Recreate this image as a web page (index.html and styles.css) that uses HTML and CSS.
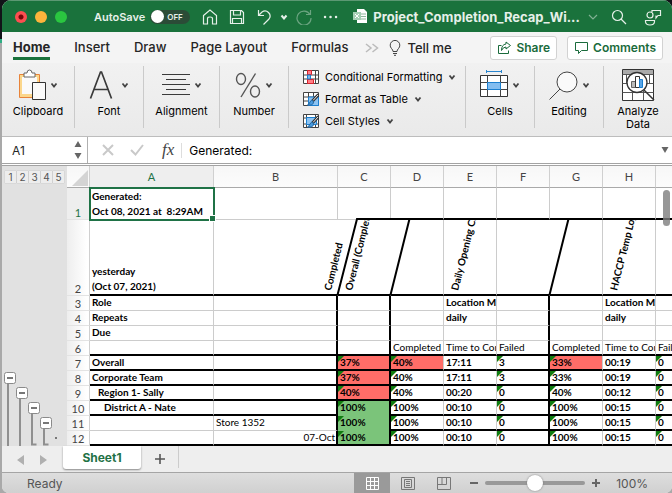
FILE: index.html
```html
<!DOCTYPE html>
<html lang="en">

<head>
    <meta charset="UTF-8">
    <meta name="viewport" content="width=device-width, initial-scale=1.0">
    <title>Project_Completion_Recap</title>
    <link rel="stylesheet" href="styles.css">
</head>

<body>
    <div class="window">
        <header class="titlebar">
            <div class="lights">
                <span class="light red"></span>
                <span class="light yellow"></span>
                <span class="light green"></span>
            </div>
            <label class="autosave">AutoSave
                <span class="toggle"><input type="checkbox"><span class="toggle-text">OFF</span></span>
            </label>
            <div class="quick">
                <button type="button" aria-label="Home">
                    <svg width="16" height="16" viewBox="0 0 16 16"><path d="M1.5 6.5 8 1l6.500 5.500V15h-4V9.500Q10.500 8 8 8t-2.500 1.500V15h-4z"/></svg>
                </button>
                <button type="button" aria-label="Save">
                    <svg width="16" height="16" viewBox="0 0 16 16"><path d="M1.500 1.500h11l2 2v11h-13zM4.500 1.500v4.500h7V1.500M3.500 14.500V9.500h9v5"/></svg>
                </button>
                <button type="button" aria-label="Undo">
                    <svg width="16" height="16" viewBox="0 0 16 16"><path d="M2.500 1v5.500H8M2.500 6.500 6 3q3.500-2.500 6.500.500t.500 6.500L7.500 15.500"/></svg>
                </button>
                <button type="button" class="tiny" aria-label="Undo list">
                    <svg width="8" height="6" viewBox="0 0 8 6"><path class="bold" d="M1.500 1.500 4 4.500 6.500 1.500"/></svg>
                </button>
                <button type="button" class="dim" aria-label="Redo">
                    <svg width="16" height="16" viewBox="0 0 16 16"><path d="M14.500 1v4.500H10M14 5.500A7 7 0 1 0 15 9"/></svg>
                </button>
                <button type="button" aria-label="More">
                    <svg width="16" height="16" viewBox="0 0 16 16"><path class="dots" d="M2 8h.1M7.500 8h.1M13 8h.1"/></svg>
                </button>
            </div>
            <div class="doc">
                <svg width="15" height="15" viewBox="0 0 15 15"><path d="M4 0h7l3 3v11H4z" fill="#fff"/><path d="M8 5h5M8 7.500h5M8 10h5" stroke="#8db89c"/><path d="M0 3h8v8H0z" fill="#a5cfb4"/><path d="m2 5 4 4M6 5 2 9" stroke="#fff"/></svg>
                <span>Project_Completion_Recap_Wi...</span>
            </div>
            <svg class="doc-more" width="10" height="6" viewBox="0 0 10 6"><path d="m1 1 4 4 4-4"/></svg>
            <div class="tools">
                <button type="button" aria-label="Search">
                    <svg width="16" height="16" viewBox="0 0 16 16"><circle cx="6.500" cy="6.500" r="5"/><path d="m10 10 5 5"/></svg>
                </button>
                <button type="button" aria-label="Share with people">
                    <svg width="18" height="18" viewBox="0 0 18 18"><circle cx="6" cy="7" r="3"/><path d="M1.500 12.500h9v1q0 3.500-4.500 3.500t-4.500-3.500zM8 4V2.500h8.500v5H14l-2 2.500V7.500"/></svg>
                </button>
            </div>
        </header>

        <nav class="tabs">
            <a href="#" class="tab active">Home</a>
            <a href="#" class="tab">Insert</a>
            <a href="#" class="tab">Draw</a>
            <a href="#" class="tab">Page Layout</a>
            <a href="#" class="tab">Formulas</a>
            <svg class="more" width="14" height="10" viewBox="0 0 14 10"><path d="m1 1 5 4-5 4M7.500 1l5 4-5 4"/></svg>
            <a href="#" class="tellme">
                <svg width="12" height="16" viewBox="0 0 12 16"><path d="M4 11.500Q4 10 2.500 8.500a4.800 4.800 0 1 1 7 0Q8 10 8 11.500zM4 13.500h4M5 15.300h2"/></svg>
                Tell me
            </a>
            <div class="actions">
                <button type="button" class="action">
                    <svg width="13" height="13" viewBox="0 0 13 13"><path d="M3.500 4.500h-3v8h10V9.500M8 1l4.500 3.500L8 8V6Q5 6 3.500 9.500 3.500 3.500 8 3z"/></svg>
                    Share
                </button>
                <button type="button" class="action">
                    <svg width="13" height="13" viewBox="0 0 13 13"><path d="M.500 1.500h12v8H6.500l-3 3v-3h-3z"/></svg>
                    Comments
                </button>
            </div>
        </nav>

        <section class="ribbon">
            <button type="button" class="group">
                <span class="icon-row">
                    <svg width="28" height="32" viewBox="0 0 28 32"><path d="M1.500 5.500h20v23h-20z" fill="#fbd78c" stroke="#e8833a"/><path d="M4 8h15v17H4z" fill="#fafafa"/><path d="M6 8V4h3q0-3 2.500-3T14 4h3v4z" fill="#fff" stroke="#666"/><path d="M14.500 13.500h13v17h-13z" fill="#fafafa" stroke="#333"/></svg>
                    <svg class="chev" width="8" height="6" viewBox="0 0 8 6"><path d="M1.500 1.500 4 4.500 6.500 1.500"/></svg>
                </span>
                <span>Clipboard</span>
            </button>
            <button type="button" class="group">
                <span class="icon-row">
                    <svg width="24" height="32" viewBox="0 0 24 32"><path d="M1.500 29.500 11.500 3h1l10 26.500M5 20.500h14" fill="none" stroke="#3a3a3a" stroke-width="1.700"/></svg>
                    <svg class="chev wide" width="8" height="6" viewBox="0 0 8 6"><path d="M1.500 1.500 4 4.500 6.500 1.500"/></svg>
                </span>
                <span>Font</span>
            </button>
            <button type="button" class="group medium">
                <span class="icon-row">
                    <svg width="28" height="32" viewBox="0 0 28 32"><path d="M0 5.500h28M4 10.500h20M0 15.500h28M4 20.500h20M0 25.500h28" stroke="#3a3a3a"/></svg>
                    <svg class="chev" width="8" height="6" viewBox="0 0 8 6"><path d="M1.500 1.500 4 4.500 6.500 1.500"/></svg>
                </span>
                <span>Alignment</span>
            </button>
            <button type="button" class="group">
                <span class="icon-row">
                    <svg width="26" height="32" viewBox="0 0 26 32"><g fill="none" stroke="#555" stroke-width="1.400"><ellipse cx="6" cy="10" rx="4.500" ry="5.500"/><ellipse cx="20" cy="22.500" rx="4.500" ry="5.500"/><path d="M20.500 4.500 6 28"/></g></svg>
                    <svg class="chev" width="8" height="6" viewBox="0 0 8 6"><path d="M1.500 1.500 4 4.500 6.500 1.500"/></svg>
                </span>
                <span>Number</span>
            </button>
            <div class="styles">
                <button type="button" class="style-btn">
                    <svg width="16" height="15" viewBox="0 0 16 15"><path d="M.500.500h15v13H.500zM.500 5h15M.500 9h15M4.500.500v13M12.500.500v13" fill="#fff" stroke="#444"/><path d="M4.500.500h4v4h-4zM4.500 9.500h6v4h-6z" fill="#ff7f86" stroke="#d8232f"/><path d="M4.500 5h3v4h-3z" fill="#7fb8ea" stroke="#1b7fd0"/></svg>
                    Conditional Formatting
                    <svg class="chev" width="8" height="6" viewBox="0 0 8 6"><path d="M1.500 1.500 4 4.500 6.500 1.500"/></svg>
                </button>
                <button type="button" class="style-btn">
                    <svg width="16" height="15" viewBox="0 0 16 15"><path d="M.500.500h15v13H.500zM.500 5h15M.500 9h15M5.500.500v13M10.500.500v13" fill="#fff" stroke="#444"/><path d="M5.500 5h10v8.500h-10z" fill="#8cc3f2" stroke="#1b7fd0"/><path d="M15.500 2.500 9.500 9" stroke="#333" stroke-width="3"/><path d="M15 3 10 8.500" stroke="#eee"/><path d="M10 8.500q-2-1-3 1.500T4.500 13q5 1 6-2z" fill="#4a9ce0" stroke="#25679f"/></svg>
                    Format as Table
                    <svg class="chev" width="8" height="6" viewBox="0 0 8 6"><path d="M1.500 1.500 4 4.500 6.500 1.500"/></svg>
                </button>
                <button type="button" class="style-btn">
                    <svg width="16" height="15" viewBox="0 0 16 15"><path d="M.500.500h15v13H.500zM.500 4h15M.500 10h15M3.500.500v13M12.500.500v13" fill="#fff" stroke="#444"/><path d="M3.500 3.500h10v7h-10z" fill="#8cc3f2" stroke="#1b7fd0"/><path d="M15.500 2.500 9.500 9" stroke="#333" stroke-width="3"/><path d="M15 3 10 8.500" stroke="#eee"/><path d="M10 8.500q-2-1-3 1.500T4.500 13q5 1 6-2z" fill="#4a9ce0" stroke="#25679f"/></svg>
                    Cell Styles
                    <svg class="chev" width="8" height="6" viewBox="0 0 8 6"><path d="M1.500 1.500 4 4.500 6.500 1.500"/></svg>
                </button>
            </div>
            <button type="button" class="group">
                <span class="icon-row">
                    <svg width="28" height="32" viewBox="0 0 28 32"><path d="M6.500 2.500h15M6.500 1v3M21.500 1v3" stroke="#2a86cf"/><path d="M.500 6.500h27v21H.500z" fill="#fff" stroke="#333"/><path d="M.500 13.500h27M.500 20.500h27M7.500 6.500v21M20.500 6.500v21" stroke="#444"/><path d="M7.500 13.500h13v7h-13z" fill="#83bdf0" stroke="#1b7fd0"/></svg>
                    <svg class="chev" width="8" height="6" viewBox="0 0 8 6"><path d="M1.500 1.500 4 4.500 6.500 1.500"/></svg>
                </span>
                <span>Cells</span>
            </button>
            <button type="button" class="group">
                <span class="icon-row">
                    <svg width="29" height="32" viewBox="0 0 29 32"><circle cx="18" cy="13" r="10" fill="#fafafa" stroke="#444"/><path d="M11 20 .500 30.500" stroke="#444"/></svg>
                    <svg class="chev" width="8" height="6" viewBox="0 0 8 6"><path d="M1.500 1.500 4 4.500 6.500 1.500"/></svg>
                </span>
                <span>Editing</span>
            </button>
            <button type="button" class="group">
                <span class="icon-row">
                    <svg width="33" height="32" viewBox="0 0 33 32"><path d="M.500.500h31v31H.500z" fill="#fff" stroke="#333"/><path d="M1 1h30v4H1z" fill="#aaa"/><path d="M.500 5.500h31M.500 14.500h31M.500 23.500h31M10.500 22v9M21.500 22v9M4.500 5v9M27.500 5v9" stroke="#555"/><circle cx="15" cy="13.500" r="10" fill="#fff" stroke="#333" stroke-width="1.300"/><path d="m22 21 10 10" stroke="#333" stroke-width="1.500"/><path d="M9.500 12.500h4v6h-4z" fill="#bbb" stroke="#666"/><path d="M13.500 7.500h4v11h-4z" fill="#fff" stroke="#333"/><path d="M17.500 10.500h3v8h-3z" fill="#5aa6e8" stroke="#1b7fd0"/></svg>
                </span>
                <span>Analyze<br>Data</span>
            </button>
        </section>

        <section class="formula-bar">
            <div class="name-box">
                <input type="text" value="A1" aria-label="Name box">
                <svg width="8" height="18" viewBox="0 0 8 18"><path d="M4 0 7.500 6h-7zM4 18 7.500 12h-7z" fill="#666"/></svg>
            </div>
            <svg class="cancel" width="12" height="12" viewBox="0 0 12 12"><path d="m1 1 10 10M11 1 1 11"/></svg>
            <svg class="cancel" width="14" height="12" viewBox="0 0 14 12"><path d="m1 6 4.500 4.500L13 1"/></svg>
            <span class="fx">fx</span>
            <input type="text" class="formula" value="Generated:" aria-label="Formula">
            <svg width="8" height="6" viewBox="0 0 8 6"><path d="M.500 0h7L4 6z" fill="#666"/></svg>
        </section>

        <main class="sheet">
            <aside class="outline">
                <div class="levels">
                    <button type="button">1</button>
                    <button type="button">2</button>
                    <button type="button">3</button>
                    <button type="button">4</button>
                    <button type="button">5</button>
                </div>
                <svg width="65" height="76" viewBox="0 0 65 76">
                    <path d="M6 14v62M18 29v47M34.500 74.500H30V44M46.500 74.500H42V59" fill="none" stroke="#8f8f8f" stroke-width="2"/>
                    <g fill="#fff" stroke="#8a8a8a"><rect x="2.500" y="2.500" width="11" height="11" rx="2"/><rect x="14.500" y="17.500" width="11" height="11" rx="2"/><rect x="26.500" y="32.500" width="11" height="11" rx="2"/><rect x="38.500" y="47.500" width="11" height="11" rx="2"/></g>
                    <path d="M5 8h6M17 23h6M29 38h6M41 53h6" stroke="#777" stroke-width="2"/>
                    <path d="M53 68h2" stroke="#777" stroke-width="2"/>
                </svg>
            </aside>
            <div class="grid">
                <table>
                    <colgroup>
                        <col class="col-num"><col class="col-wide"><col class="col-wide">
                        <col><col><col><col><col><col><col>
                    </colgroup>
                    <thead>
                        <tr>
                            <th class="corner"><svg width="16" height="16" viewBox="0 0 16 16"><path d="M16 0v16H0z" fill="#d4d4d4"/></svg></th>
                            <th class="current">A</th><th>B</th><th>C</th><th>D</th><th>E</th><th>F</th><th>G</th><th>H</th><th></th>
                        </tr>
                    </thead>
                    <tbody>
                        <tr class="row-1">
                            <th class="current">1</th>
                            <td class="selected"><b>Generated:<br>Oct 08, 2021 at&nbsp; 8:29AM</b><i class="handle"></i></td>
                            <td></td><td></td><td class="bb"></td><td class="bb"></td><td class="bb"></td><td class="bb"></td><td class="bb"></td><td class="bb"></td>
                        </tr>
                        <tr class="row-2 thick">
                            <th>2</th>
                            <td><b>yesterday<br>(Oct 07, 2021)</b></td>
                            <td class="open"><div class="tilt spill"><b class="late">Completed</b></div></td>
                            <td class="open"><svg class="slash" width="53" height="78" viewBox="0 0 53 78"><path d="M-.500 77 19 1h34"/></svg><div class="tilt"><b>Overall (Completed)</b></div></td>
                            <td><svg class="slash" width="53" height="78" viewBox="0 0 53 78"><path d="M-.500 77 18.500 1"/></svg></td>
                            <td><div class="tilt"><b>Daily Opening Checklist</b></div></td>
                            <td class="open"></td>
                            <td><svg class="slash" width="53" height="78" viewBox="0 0 53 78"><path d="M-.500 77 18.500 1"/></svg></td>
                            <td><div class="tilt"><b>HACCP Temp Log</b></div></td>
                            <td></td>
                        </tr>
                        <tr>
                            <th>3</th><td><b>Role</b></td><td class="br"></td><td class="br"></td><td></td><td><b>Location Manager</b></td><td class="br"></td><td></td><td><b>Location Manager</b></td><td></td>
                        </tr>
                        <tr>
                            <th>4</th><td><b>Repeats</b></td><td class="br"></td><td class="br"></td><td></td><td><b>daily</b></td><td class="br"></td><td></td><td><b>daily</b></td><td></td>
                        </tr>
                        <tr>
                            <th>5</th><td><b>Due</b></td><td class="br"></td><td class="br"></td><td></td><td></td><td class="br"></td><td></td><td></td><td></td>
                        </tr>
                        <tr class="thick">
                            <th>6</th><td></td><td class="br"></td><td class="br"></td><td>Completed</td><td>Time to Complete</td><td class="br">Failed</td><td>Completed</td><td>Time to Complete</td><td>Failed</td>
                        </tr>
                        <tr class="thick data">
                            <th>7</th><td>Overall</td><td class="br"></td><td class="br flag low">37%</td><td class="flag low">40%</td><td>17:11</td><td class="br flag">3</td><td class="flag low">33%</td><td>00:19</td><td class="flag">0</td>
                        </tr>
                        <tr class="thick data">
                            <th>8</th><td>Corporate Team</td><td class="br"></td><td class="br flag low">37%</td><td class="flag">40%</td><td>17:11</td><td class="br flag">3</td><td class="flag">33%</td><td>00:19</td><td class="flag">0</td>
                        </tr>
                        <tr class="thick data">
                            <th>9</th><td class="indent-1">Region 1- Sally</td><td class="br"></td><td class="br flag low">40%</td><td class="flag">40%</td><td>00:20</td><td class="br flag">0</td><td class="flag">40%</td><td>00:12</td><td class="flag">0</td>
                        </tr>
                        <tr class="thick data">
                            <th>10</th><td class="indent-2">District A - Nate</td><td class="br"></td><td class="br flag full joined">100%</td><td class="flag">100%</td><td>00:10</td><td class="br flag">0</td><td class="flag">100%</td><td>00:15</td><td class="flag">0</td>
                        </tr>
                        <tr class="thick data">
                            <th>11</th><td class="thin"></td><td class="br thin">Store 1352</td><td class="br flag full joined">100%</td><td class="flag">100%</td><td>00:10</td><td class="br flag">0</td><td class="flag">100%</td><td>00:15</td><td class="flag">0</td>
                        </tr>
                        <tr class="thick data">
                            <th>12</th><td></td><td class="br date">07-Oct</td><td class="br flag full">100%</td><td class="flag">100%</td><td>00:10</td><td class="br flag">0</td><td class="flag">100%</td><td>00:15</td><td class="flag">0</td>
                        </tr>
                    </tbody>
                </table>
                <span class="scroll-thumb"></span>
            </div>
        </main>

        <div class="sheet-tabs">
            <svg class="arrows" width="30" height="10" viewBox="0 0 30 10"><path d="M7 0v10L0 5zM23 0v10l7-5z" fill="#b0b0b0"/></svg>
            <button type="button" class="sheet-tab">Sheet1</button>
            <button type="button" class="add" aria-label="Add sheet"><svg width="10" height="10" viewBox="0 0 10 10"><path d="M5 0v10M0 5h10" stroke="#555" stroke-width="1.600"/></svg></button>
        </div>

        <footer class="status">
            <span class="ready">Ready</span>
            <button type="button" class="view on" aria-label="Normal view"><svg width="13" height="13" viewBox="0 0 13 13"><path d="M.500.500h12v12H.500zM.500 4.500h12M.500 8.500h12M4.500.500v12M8.500.500v12" fill="none" stroke="#fff"/></svg></button>
            <button type="button" class="view" aria-label="Page layout"><svg width="14" height="13" viewBox="0 0 14 13"><path d="M.500.500h13v12H.500zM3.500 2.500h7v8h-7zM5 4.500h4M5 6.500h4M5 8.500h4" fill="none" stroke="#777"/></svg></button>
            <button type="button" class="view" aria-label="Page break"><svg width="14" height="13" viewBox="0 0 14 13"><path d="M.500.500h13v12H.500zM.500 7.500h9v-7M5 .500v7" fill="none" stroke="#777"/></svg></button>
            <div class="zoom">
                <svg width="8" height="8" viewBox="0 0 8 8"><path d="M0 4h8" stroke="#666" stroke-width="2"/></svg>
                <input type="range" min="0" max="200" value="100" aria-label="Zoom">
                <svg width="8" height="8" viewBox="0 0 8 8"><path d="M0 4h8M4 0v8" stroke="#666" stroke-width="2"/></svg>
                <span class="percent">100%</span>
            </div>
        </footer>
    </div>
</body>

</html>
```
FILE: styles.css
```css
* {
    box-sizing: border-box;
}

body {
    margin: 0;
    padding-left: 2px;
    background: linear-gradient(#111318 39px, #2fae84 39px, #2fae84 43px, #a9a9a9 43px);
    font-family: Inter, "Liberation Sans", sans-serif;
    font-size: 11px;
    color: #262626;
    overflow: hidden;
}

button {
    padding: 0;
    border: 0;
    background: none;
    font: inherit;
    color: inherit;
}

input {
    font: inherit;
    color: inherit;
}

svg {
    display: block;
    flex: none;
}

a {
    color: inherit;
    text-decoration: none;
}

.window {
    display: flex;
    flex-direction: column;
    min-height: 100vh;
    border-radius: 9px 9px 7px 7px;
    overflow: hidden;
    background: #f0f0f0;
}

/* title bar */
.titlebar {
    display: flex;
    align-items: center;
    height: 32px;
    padding: 0 10px 0 13px;
    background: #1a723c;
    border-top: 1px solid #5c9873;
    color: #e6f0e9;
}

.titlebar button svg,
.doc-more {
    fill: none;
    stroke: #e6f0e9;
    stroke-width: 1.2;
}

.titlebar .bold {
    stroke-width: 2;
}

.titlebar .dots {
    stroke-width: 2.4;
    stroke-linecap: round;
}

.lights {
    display: flex;
    gap: 8px;
}

.light {
    width: 12px;
    height: 12px;
    border-radius: 50%;
}

.red {
    background: radial-gradient(#7a0508 2px, #fc4e50 3px);
}

.yellow {
    background: #fdb43c;
}

.green {
    background: #2ac640;
}

.autosave {
    display: flex;
    align-items: center;
    gap: 5px;
    margin-left: 27px;
    font-size: 11px;
    font-weight: 600;
}

.toggle {
    display: flex;
    align-items: center;
    width: 40px;
    height: 14px;
    border-radius: 7px;
    background: #2b4c37;
}

.toggle input {
    appearance: none;
    width: 13px;
    height: 13px;
    margin: 0 3px 0 1px;
    border-radius: 50%;
    background: #fff;
}

.toggle-text {
    font-size: 8px;
    font-weight: 600;
}

.quick {
    display: flex;
    align-items: center;
    gap: 11px;
    margin-left: 12px;
}

.quick .tiny {
    margin: 0 -3px;
}

.dim {
    opacity: 0.4;
}

.doc {
    display: flex;
    align-items: center;
    gap: 5px;
    margin-left: 14px;
    font-size: 13px;
    font-weight: 700;
}

.doc-more {
    opacity: 0.5;
    margin-left: 8px;
}

.tools {
    display: flex;
    align-items: center;
    gap: 17px;
    margin-left: auto;
}

/* ribbon tabs */
.tabs {
    display: flex;
    align-items: center;
    gap: 24px;
    height: 31px;
    padding: 0 9px 0 11px;
    background: #f4f4f4;
    font-size: 13px;
    font-weight: 500;
}

.tab {
    height: 31px;
    padding-top: 7px;
    line-height: 16px;
    white-space: nowrap;
}

.active {
    font-weight: 700;
    background: linear-gradient(#1a723c, #1a723c) 0 25px / 100% 3px no-repeat;
}

.more {
    margin: 0 -14px 0 -7px;
    fill: none;
    stroke: #bbb;
    stroke-width: 1.5;
}

.tellme {
    display: flex;
    align-items: center;
    gap: 6px;
    white-space: nowrap;
}

.tellme svg {
    fill: none;
    stroke: #444;
}

.actions {
    display: flex;
    gap: 10px;
    margin-left: auto;
}

.action {
    display: flex;
    align-items: center;
    gap: 5px;
    height: 24px;
    padding: 0 6px 0 7px;
    border: 1px solid #d2d2d2;
    border-radius: 3px;
    background: #fff;
    color: #1a6b3c;
    font-size: 12px;
    font-weight: 600;
}

.action svg {
    fill: none;
    stroke: #1a6b3c;
}

/* ribbon */
.ribbon {
    display: flex;
    height: 74px;
    padding: 3px 0 8px;
    border-bottom: 1px solid #bdbdbd;
    background: linear-gradient(#f1f1f1, #eaeaea);
}

.group {
    display: flex;
    flex: none;
    flex-direction: column;
    align-items: center;
    width: 69px;
    padding-top: 3px;
    border-right: 1px solid #cacaca;
    line-height: 13px;
    color: #000;
}

.group:first-child {
    width: 73px;
}

.group:last-child {
    width: 68px;
    border-right: 0;
}

.group.medium {
    width: 76px;
}

.icon-row {
    display: flex;
    align-items: center;
    gap: 4px;
    height: 32px;
    margin-bottom: 4px;
}

.chev {
    fill: none;
    stroke: #444;
    stroke-width: 1.8;
}

.wide {
    margin-left: 4px;
}

.styles {
    display: flex;
    flex: 1;
    flex-direction: column;
    padding-left: 14px;
    border-right: 1px solid #cacaca;
}

.style-btn {
    display: flex;
    flex: none;
    align-items: center;
    gap: 6px;
    height: 22px;
    white-space: nowrap;
    color: #000;
}

/* formula bar */
.formula-bar {
    display: flex;
    align-items: center;
    height: 29px;
    padding-right: 3px;
    border-bottom: 3px double #a3a3a3;
    background: #fff;
}

.name-box {
    display: flex;
    align-items: center;
    width: 86px;
    height: 26px;
    padding: 0 5px 0 10px;
    border-right: 1px solid #b0b0b0;
}

.name-box input,
.formula {
    flex: 1;
    min-width: 0;
    padding: 0;
    border: 0;
    background: none;
    font-size: 12px;
}

.cancel {
    margin-left: 14px;
    fill: none;
    stroke: #c9c9c9;
    stroke-width: 2;
}

.cancel + .cancel {
    margin-left: 16px;
}

.fx {
    margin: 0 7px 0 18px;
    font: italic 17px/20px "Liberation Serif", serif;
    color: #444;
}

.formula {
    padding-left: 7px;
    border-left: 1px solid #ddd;
    color: #000;
}

/* sheet */
.sheet {
    display: flex;
    height: 280px;
}

.outline {
    display: flex;
    flex: none;
    flex-direction: column;
    justify-content: space-between;
    width: 65px;
    background: #e1e1e1;
}

.levels {
    display: flex;
    gap: 1px;
    padding: 5px 0 0 3px;
}

.levels button {
    width: 11px;
    height: 12px;
    background: #ededed;
    box-shadow: 0 0 1px #aaa;
    font-size: 10px;
    line-height: 12px;
    color: #555;
}

.grid {
    position: relative;
    flex: 1;
    min-width: 0;
    overflow: hidden;
    background: #fff;
}

.grid table {
    width: 642px;
    table-layout: fixed;
    border-spacing: 0;
    font-family: Lato, "Liberation Sans", sans-serif;
    font-size: 10px;
    line-height: 13px;
    color: #000;
}

.col-num {
    width: 23px;
}

.col-wide {
    width: 124px;
}

.grid th {
    padding: 0;
    border-right: 1px solid #d0d0d0;
    font-size: 11px;
    font-weight: 400;
    color: #444;
}

thead th {
    height: 22px;
    border-bottom: 1px solid #aaa;
    background: linear-gradient(#f7f7f7, #fcfcfc);
}

.grid thead .current {
    background: #eee;
    color: #1f7246;
}

.corner svg {
    margin: 2px 0 0 5px;
}

tbody th {
    border-bottom: 1px solid #e3e3e3;
    background: linear-gradient(90deg, #eee, #fff 20px);
    vertical-align: bottom;
}

.grid tbody .current {
    background: #eee;
    color: #1f7246;
}

tbody tr {
    height: 15px;
}

td {
    position: relative;
    height: 15px;
    padding: 0 0 1px 2px;
    border-right: 1px solid #ccc;
    border-bottom: 1px solid #ccc;
    vertical-align: bottom;
    white-space: nowrap;
    overflow: hidden;
}

.row-1 td {
    height: 32px;
    padding-bottom: 0;
}

.row-2 td {
    height: 76px;
    overflow: visible;
}

.row-1 td,
.row-2 td {
    line-height: 15px;
}

.bb,
.thick td {
    padding-bottom: 0;
    border-bottom: 2px solid #000;
}

.thick .thin {
    padding-bottom: 1px;
    border-bottom: 1px solid #ccc;
}

.thick .joined {
    padding-bottom: 2px;
    border-bottom: 0;
}

.br {
    border-right: 2px solid #000;
}

.open {
    border-right-color: transparent;
}

.data td {
    font-weight: 700;
}

.data td:nth-child(3) {
    font-weight: 400;
}

.data .indent-1 {
    padding-left: 8px;
}

.data .indent-2 {
    padding-left: 14px;
}

.date {
    padding-right: 1px;
    text-align: right;
}

.low {
    background: #ff6d68;
}

.full {
    background: #7bc47a;
}

.flag::before {
    content: "";
    position: absolute;
    top: 0;
    left: 0;
    border-top: 6px solid #107c10;
    border-right: 6px solid transparent;
}

.row-1 .selected {
    overflow: visible;
    outline: 2px solid #1f7246;
    outline-offset: -1px;
    z-index: 1;
}

.handle {
    position: absolute;
    right: -2px;
    bottom: -2px;
    width: 5px;
    height: 5px;
    background: #1f7246;
    box-shadow: 0 0 0 1px #fff;
}

.slash {
    position: absolute;
    top: -2px;
    left: 0;
    overflow: visible;
    fill: none;
    stroke: #000;
    stroke-width: 2;
}

.tilt {
    position: absolute;
    inset: 0;
    overflow: hidden;
}

.tilt b {
    position: absolute;
    bottom: 2px;
    left: 18px;
    transform: rotate(-76deg);
    transform-origin: 0 100%;
}

.spill {
    overflow: visible;
}

.tilt .late {
    left: 121px;
}

.scroll-thumb {
    position: absolute;
    top: 24px;
    right: 2px;
    width: 7px;
    height: 36px;
    border-radius: 4px;
    background: rgba(125, 125, 125, 0.8);
}

/* sheet tabs */
.sheet-tabs {
    display: flex;
    height: 26px;
    background: #eee;
}

.arrows {
    margin: 9px 16px 0 15px;
}

.sheet-tab {
    width: 78px;
    height: 23px;
    border-radius: 0 0 3px 3px;
    background: #fff;
    box-shadow: 0 1px 2px #888;
    color: #1f7246;
    font-size: 12px;
    font-weight: 700;
}

.add {
    display: flex;
    align-items: center;
    justify-content: center;
    width: 38px;
    height: 22px;
    padding-top: 4px;
    border-right: 1px solid #ccc;
}

/* status bar */
.status {
    display: flex;
    align-items: center;
    flex: 1;
    min-height: 21px;
    padding: 0 24px 0 25px;
    border-top: 1px solid #a5a5a5;
    background: linear-gradient(#dedede, #d0d0d0);
    font-size: 12px;
    color: #555;
}

.ready {
    margin-right: auto;
}

.view {
    display: flex;
    align-items: center;
    justify-content: center;
    align-self: stretch;
    width: 36px;
}

.on {
    background: #9a9a9a;
}

.zoom {
    display: flex;
    align-items: center;
    gap: 7px;
    margin-left: 8px;
}

.zoom input {
    appearance: none;
    width: 100px;
    height: 4px;
    margin: 0;
    border-radius: 2px;
    background: #999;
}

.zoom input::-webkit-slider-thumb {
    appearance: none;
    width: 16px;
    height: 16px;
    border-radius: 50%;
    background: #fff;
    box-shadow: 0 0 2px #777;
}

.percent {
    margin-left: 9px;
}
```
